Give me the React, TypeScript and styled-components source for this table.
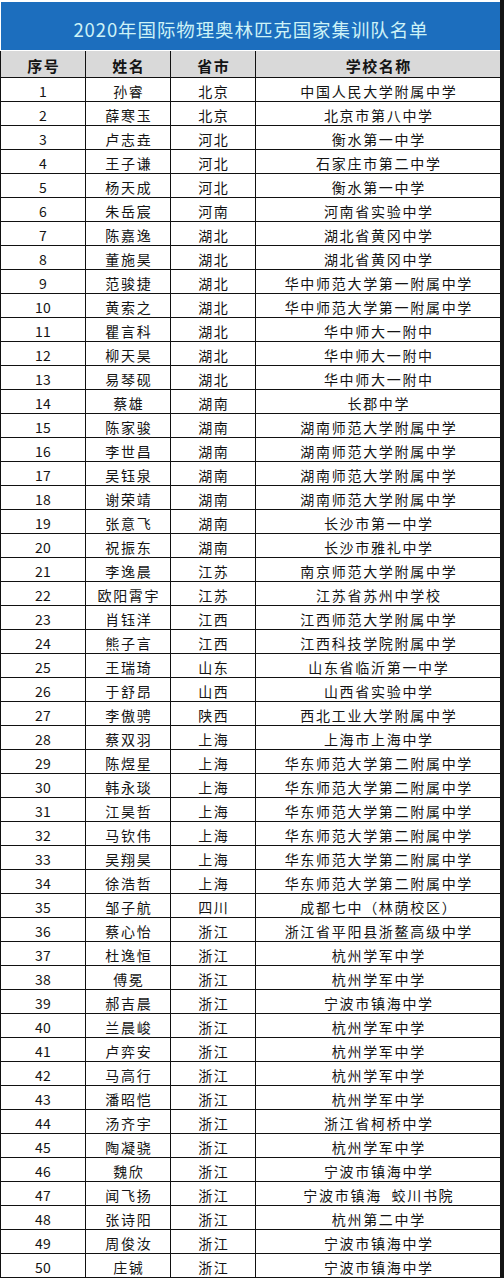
import React from "react";
import styled, { createGlobalStyle } from "styled-components";

const GlobalStyle = createGlobalStyle`
  html, body {
    margin: 0;
    padding: 0;
    background: #ffffff;
  }
  body {
    font-family: "Noto Sans CJK SC", "Noto Sans", sans-serif;
    color: #111111;
  }
`;

const Page = styled.div`
  width: 504px;
  box-sizing: border-box;
  border-right: 4px solid #141414;
  padding-top: 2px;
  background: #ffffff;
`;

const TitleBar = styled.div`
  margin-left: 1px;
  height: 48px;
  background: #1c6ebe;
  display: flex;
  align-items: center;
  justify-content: center;
  color: #cdf2f7;
  font-family: "Noto Sans CJK SC", sans-serif;
  font-size: 18.5px;
  letter-spacing: 0.9px;
  padding-top: 5px;
  padding-left: 1px;
  box-sizing: border-box;
  margin-bottom: 1px;
`;

const Table = styled.div`
  display: flex;
  flex-direction: column;
  border-left: 1px solid #111111;
`;

const Row = styled.div<{ $header?: boolean }>`
  display: grid;
  grid-template-columns: 85px 85px 85px 1fr;
  height: ${(p) => (p.$header ? "27px" : "24px")};
  box-sizing: border-box;
  border-bottom: 1px solid #111111;
  background: ${(p) => (p.$header ? "#d9d9d9" : "#ffffff")};
`;

const Cell = styled.div<{ $header?: boolean; $num?: boolean; $last?: boolean }>`
  display: flex;
  align-items: center;
  justify-content: center;
  box-sizing: border-box;
  border-right: ${(p) => (p.$last ? "none" : "1px solid #111111")};
  font-size: ${(p) => (p.$header ? "15px" : "14px")};
  font-weight: ${(p) => (p.$header ? 700 : 400)};
  letter-spacing: ${(p) => (p.$num ? "0.3px" : p.$header ? "1.5px" : "1.7px")};
  padding-left: ${(p) => (p.$num ? "0" : p.$header ? "1.5px" : "1.7px")};
  padding-top: 2px;
  white-space: pre;
  color: #141414;
  line-height: 1;
`;

type Entry = [string, string, string];

const data: Entry[] = [
  ["孙睿", "北京", "中国人民大学附属中学"],
  ["薛寒玉", "北京", "北京市第八中学"],
  ["卢志垚", "河北", "衡水第一中学"],
  ["王子谦", "河北", "石家庄市第二中学"],
  ["杨天成", "河北", "衡水第一中学"],
  ["朱岳宸", "河南", "河南省实验中学"],
  ["陈嘉逸", "湖北", "湖北省黄冈中学"],
  ["董施昊", "湖北", "湖北省黄冈中学"],
  ["范骏捷", "湖北", "华中师范大学第一附属中学"],
  ["黄索之", "湖北", "华中师范大学第一附属中学"],
  ["瞿言科", "湖北", "华中师大一附中"],
  ["柳天昊", "湖北", "华中师大一附中"],
  ["易琴砚", "湖北", "华中师大一附中"],
  ["蔡雄", "湖南", "长郡中学"],
  ["陈家骏", "湖南", "湖南师范大学附属中学"],
  ["李世昌", "湖南", "湖南师范大学附属中学"],
  ["吴钰泉", "湖南", "湖南师范大学附属中学"],
  ["谢荣靖", "湖南", "湖南师范大学附属中学"],
  ["张意飞", "湖南", "长沙市第一中学"],
  ["祝振东", "湖南", "长沙市雅礼中学"],
  ["李逸晨", "江苏", "南京师范大学附属中学"],
  ["欧阳霄宇", "江苏", "江苏省苏州中学校"],
  ["肖钰洋", "江西", "江西师范大学附属中学"],
  ["熊子言", "江西", "江西科技学院附属中学"],
  ["王瑞琦", "山东", "山东省临沂第一中学"],
  ["于舒昂", "山西", "山西省实验中学"],
  ["李傲骋", "陕西", "西北工业大学附属中学"],
  ["蔡双羽", "上海", "上海市上海中学"],
  ["陈煜星", "上海", "华东师范大学第二附属中学"],
  ["韩永琰", "上海", "华东师范大学第二附属中学"],
  ["江昊哲", "上海", "华东师范大学第二附属中学"],
  ["马钦伟", "上海", "华东师范大学第二附属中学"],
  ["吴翔昊", "上海", "华东师范大学第二附属中学"],
  ["徐浩哲", "上海", "华东师范大学第二附属中学"],
  ["邹子航", "四川", "成都七中（林荫校区）"],
  ["蔡心怡", "浙江", "浙江省平阳县浙鳌高级中学"],
  ["杜逸恒", "浙江", "杭州学军中学"],
  ["傅冕", "浙江", "杭州学军中学"],
  ["郝吉晨", "浙江", "宁波市镇海中学"],
  ["兰晨峻", "浙江", "杭州学军中学"],
  ["卢弈安", "浙江", "杭州学军中学"],
  ["马高行", "浙江", "杭州学军中学"],
  ["潘昭恺", "浙江", "杭州学军中学"],
  ["汤齐宇", "浙江", "浙江省柯桥中学"],
  ["陶凝骁", "浙江", "杭州学军中学"],
  ["魏欣", "浙江", "宁波市镇海中学"],
  ["闻飞扬", "浙江", "宁波市镇海  蛟川书院"],
  ["张诗阳", "浙江", "杭州第二中学"],
  ["周俊汝", "浙江", "宁波市镇海中学"],
  ["庄铖", "浙江", "宁波市镇海中学"],
];

export default function App() {
  return (
    <>
      <GlobalStyle />
      <Page>
        <TitleBar>2020年国际物理奥林匹克国家集训队名单</TitleBar>
        <Table>
          <Row $header>
            <Cell $header>序号</Cell>
            <Cell $header>姓名</Cell>
            <Cell $header>省市</Cell>
            <Cell $header $last>学校名称</Cell>
          </Row>
          {data.map(([name, prov, school], i) => (
            <Row key={i}>
              <Cell $num>{i + 1}</Cell>
              <Cell>{name}</Cell>
              <Cell>{prov}</Cell>
              <Cell $last>{school}</Cell>
            </Row>
          ))}
        </Table>
      </Page>
    </>
  );
}
